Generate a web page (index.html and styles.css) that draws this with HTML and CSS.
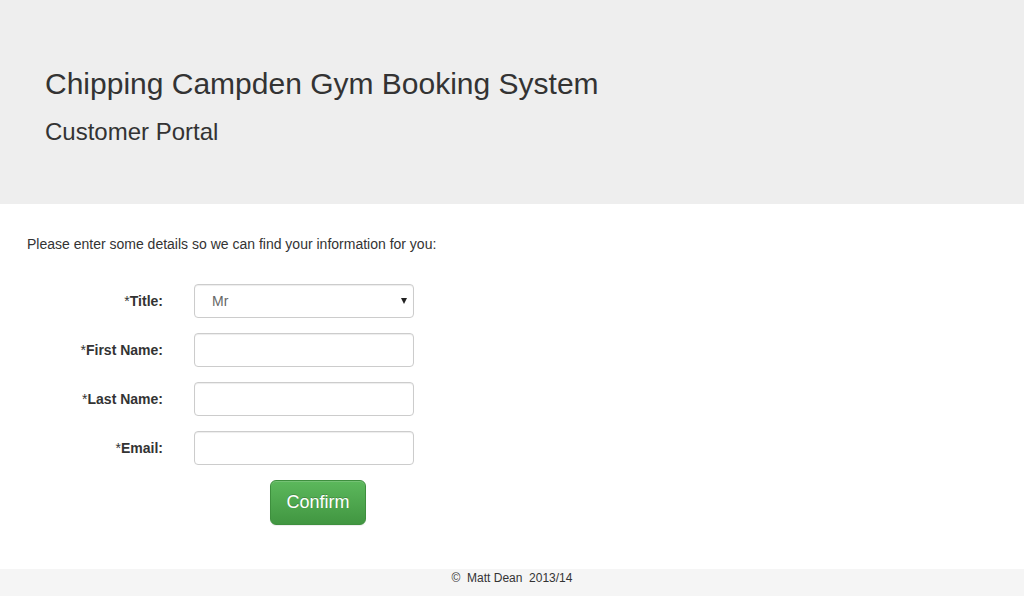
FILE: index.html
```html
<!DOCTYPE html>
<html>
<head>
<meta charset="utf-8">
<title>Customer Portal</title>
<link rel="stylesheet" href="styles.css">
</head>
<body>
<header class="jumbotron">
  <h1 class="site-title">Chipping Campden Gym Booking System</h1>
  <h3 class="site-subtitle">Customer Portal</h3>
</header>
<main class="content">
  <p class="intro">Please enter some details so we can find your information for you:</p>
  <form class="form">
    <div class="row">
      <label class="label">*<b>Title:</b></label>
      <div class="select-wrap">
        <select class="control select">
          <option>Mr</option>
          <option>Mrs</option>
          <option>Miss</option>
          <option>Ms</option>
          <option>Dr</option>
        </select>
      </div>
    </div>
    <div class="row">
      <label class="label">*<b>First Name:</b></label>
      <input class="control" type="text">
    </div>
    <div class="row">
      <label class="label">*<b>Last Name:</b></label>
      <input class="control" type="text">
    </div>
    <div class="row">
      <label class="label">*<b>Email:</b></label>
      <input class="control" type="email">
    </div>
    <div class="actions">
      <button class="btn-confirm" type="button">Confirm</button>
    </div>
  </form>
</main>
<footer class="footer">&copy;&nbsp; Matt Dean &nbsp;2013/14</footer>
</body>
</html>
```

FILE: styles.css
```css
* { box-sizing: border-box; }
html, body { margin: 0; padding: 0; }
body {
  font-family: "Liberation Sans", Arial, sans-serif;
  font-size: 14px;
  line-height: 20px;
  color: #333;
  background: #fff;
  height: 596px;
  display: flex;
  flex-direction: column;
}
.jumbotron {
  background: #eee;
  height: 204px;
  padding: 67px 45px 0;
}
.site-title {
  margin: 0;
  font-size: 30px;
  line-height: 33px;
  font-weight: normal;
  color: #333;
}
.site-subtitle {
  margin: 19px 0 0;
  font-size: 24px;
  line-height: 26px;
  font-weight: normal;
  color: #333;
}
.content {
  flex: 1;
  padding: 30px 27px 0;
}
.intro { margin: 0 0 30px; }
.form {
  display: flex;
  flex-direction: column;
  gap: 15px;
}
.row {
  display: flex;
  align-items: center;
}
.label {
  width: 136px;
  text-align: right;
  margin-right: 31px;
  font-size: 14px;
}
.control {
  width: 220px;
  height: 34px;
  border: 1px solid #ccc;
  border-radius: 4px;
  box-shadow: inset 0 1px 1px rgba(0,0,0,.075);
  font-family: inherit;
  font-size: 14px;
  color: #555;
  padding: 6px 12px;
  background: #fff;
  outline: none;
}
.select-wrap { position: relative; width: 220px; }
.select {
  appearance: none;
  -webkit-appearance: none;
  padding-left: 17px;
  color: #666;
}
.select-wrap::after {
  content: "";
  position: absolute;
  right: 7px;
  top: 14px;
  border-left: 3.5px solid transparent;
  border-right: 3.5px solid transparent;
  border-top: 6px solid #222;
  pointer-events: none;
}
.actions { padding-left: 243px; }
.btn-confirm {
  width: 96px;
  height: 45px;
  border: 1px solid #3e8f3e;
  border-radius: 6px;
  background: linear-gradient(to bottom, #5cb85c 0%, #419641 100%);
  color: #fff;
  font-family: inherit;
  font-size: 18px;
  box-shadow: inset 0 1px 0 rgba(255,255,255,.15), 0 1px 1px rgba(0,0,0,.075);
  text-shadow: 0 -1px 0 rgba(0,0,0,.2);
  cursor: pointer;
}
.footer {
  background: #f5f5f5;
  height: 27px;
  text-align: center;
  font-size: 12px;
  line-height: 18px;
  color: #333;
}
```
